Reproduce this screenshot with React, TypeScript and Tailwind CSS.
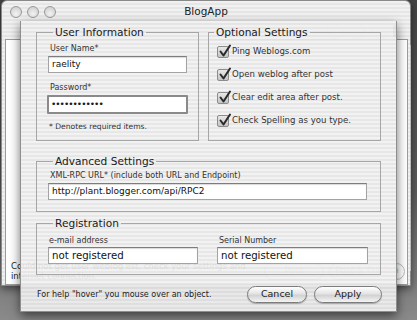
import React from 'react'

const stripes =
  'bg-[repeating-linear-gradient(180deg,#f1f1f1_0px,#f1f1f1_2px,#e6e6e6_2px,#e6e6e6_4px)]'

function Light() {
  return (
    <div className="w-[12px] h-[12px] rounded-full border border-[#9a9a9a] bg-[radial-gradient(circle_at_50%_70%,#f4f4f4,#c9c9c9)]" />
  )
}

function Check({ label }: { label: string }) {
  return (
    <div className="flex items-center h-[23px]">
      <div className="relative w-[12px] h-[12px] rounded-[2px] border border-[#8c8c8c] bg-gradient-to-b from-[#e8e8e8] to-[#c4c4c4] ml-[8px] mr-[3px]">
        <svg viewBox="0 0 14 14" className="absolute -top-[3px] left-[0px] w-[14px] h-[14px]">
          <path d="M2.5 7.5 L5.5 11.5 L12 1.5" fill="none" stroke="#2a2a2a" strokeWidth="2" strokeLinecap="round" strokeLinejoin="round" />
        </svg>
      </div>
      <span className="text-[8.6px] text-[#333]">{label}</span>
    </div>
  )
}

function Field({ value, className = '', text = 'text-[9px]' }: { value: string; className?: string; text?: string }) {
  return (
    <div
      className={`h-[17px] bg-white border border-[#a3a3a3] border-t-[#7d7d7d] shadow-[inset_0_1px_1px_rgba(0,0,0,0.15)] flex items-center px-[3px] ${text} text-[#111] ${className}`}
    >
      {value}
    </div>
  )
}

function Button({ label, w }: { label: string; w: string }) {
  return (
    <div
      className={`${w} h-[17px] rounded-full border border-[#7c7c7c] bg-[linear-gradient(180deg,#ffffff_0%,#e4e4e4_45%,#d2d2d2_55%,#f4f4f4_100%)] shadow-[0_1px_1px_rgba(0,0,0,0.25)] flex items-center justify-center text-[9.5px] text-[#1a1a1a]`}
    >
      {label}
    </div>
  )
}

export default function App() {
  return (
    <div className="relative w-[417px] h-[320px] overflow-hidden bg-[linear-gradient(180deg,#454545_0%,#5c5c5c_60%,#8a8a8a_100%)] font-['DejaVu_Sans',sans-serif]">
      {/* main window behind the sheet */}
      <div className={`absolute left-[1px] top-0 w-[410px] h-[286px] rounded-t-[6px] ${stripes} border border-[#8a8a8a] shadow-[0_3px_8px_rgba(0,0,0,0.5)] flex flex-col`}>
        <div className="h-[21px] flex items-center pl-[8px] gap-[5px] relative">
          <Light />
          <Light />
          <Light />
          <div className="absolute inset-0 flex items-center justify-center text-[10.5px] text-[#222]">BlogApp</div>
        </div>
        <div className="h-[17px] flex items-center justify-end gap-[6px] pr-[14px]">
          <div className="w-[16px] h-[16px] rounded-full border border-[#cfcfcf]" />
          <div className="w-[16px] h-[16px] rounded-full border border-[#cfcfcf]" />
          <div className="w-[16px] h-[16px] rounded-full border border-[#cfcfcf]" />
          <div className="w-[3px] h-[12px] bg-[#777]" />
        </div>
        <div className="flex-1 flex">
          <div className="flex-1 bg-white border border-[#9c9c9c] ml-[3px] flex flex-col justify-end pb-[3px]">
            <div className="flex items-center">
              <div className="pl-[5px] text-[8.5px] leading-[10px] text-[#222] w-[258px]">
                Could not get user weblog list, check your settings and internet connection.
              </div>
              <div className="flex-1 flex justify-end gap-[5px] pr-[2px]">
                <div className="w-[60px] h-[17px] rounded-full border border-[#bbb] text-[9px] text-[#bbb] flex items-center justify-center">Post</div>
                <div className="w-[76px] h-[17px] rounded-full border border-[#bbb] text-[9px] text-[#bbb] flex items-center justify-center">Post &amp; Publish</div>
              </div>
            </div>
          </div>
          <div className="w-[13px] flex flex-col">
            <div className="flex-1 bg-white border-l border-[#bbb] ml-[2px] mr-[1px] mt-[6px] mb-[14px]" />
          </div>
        </div>
      </div>

      {/* sheet */}
      <div className="absolute left-[20px] top-[21px] w-[377px] h-[291px] bg-[repeating-linear-gradient(180deg,rgba(241,241,241,0.93)_0px,rgba(241,241,241,0.93)_2px,rgba(229,229,229,0.93)_2px,rgba(229,229,229,0.93)_4px)] border-x border-b border-[#8e8e8e] shadow-[0_4px_10px_rgba(0,0,0,0.55)] px-[15px] pt-[5px] text-[#1a1a1a]">
        <div className="flex gap-[9px]">
          <fieldset className="w-[163px] h-[115px] border border-[#a6a6a6] px-[11px]">
            <legend className="ml-[5px] px-[2px] text-[10.6px] leading-[13px]">User Information</legend>
            <div className="text-[8px] leading-[10px] pl-[2px] mt-[5px] text-[#333]">User Name*</div>
            <Field value="raelity" className="mt-[2px]" />
            <div className="text-[8px] leading-[10px] pl-[2px] mt-[10px] text-[#333]">Password*</div>
            <div className="mt-[2px] border-[2px] border-[#8a8a8a] rounded-[1px] -mx-[1px]">
              <div className="h-[15px] bg-white flex items-center px-[2px] text-[9px] tracking-[-1px]">••••••••••••</div>
            </div>
            <div className="text-[7.6px] leading-[10px] pl-[1px] mt-[8px] text-[#333]">* Denotes required items.</div>
          </fieldset>
          <fieldset className="w-[173px] h-[115px] border border-[#a6a6a6]">
            <legend className="ml-[5px] px-[2px] text-[10.6px] leading-[13px]">Optional Settings</legend>
            <div className="mt-[1px]">
              <Check label="Ping Weblogs.com" />
              <Check label="Open weblog after post" />
              <Check label="Clear edit area after post." />
              <Check label="Check Spelling as you type." />
            </div>
          </fieldset>
        </div>

        <fieldset className="mt-[14px] w-[345px] h-[57px] border border-[#a6a6a6] px-[11px]">
          <legend className="ml-[5px] px-[2px] text-[10.6px] leading-[13px]">Advanced Settings</legend>
          <div className="text-[8px] leading-[10px] pl-[2px] mt-[3px] text-[#333]">
            XML-RPC URL* (include both URL and Endpoint)
          </div>
          <Field value="http://plant.blogger.com/api/RPC2" className="mt-[2px] mr-[2px]" />
        </fieldset>

        <fieldset className="mt-[5px] w-[345px] h-[58px] border border-[#a6a6a6] px-[11px]">
          <legend className="ml-[5px] px-[2px] text-[10.6px] leading-[13px]">Registration</legend>
          <div className="flex gap-[19px] mt-[6px]">
            <div className="w-[150px]">
              <div className="text-[8px] leading-[10px] pl-[1px] text-[#333]">e-mail address</div>
              <Field value="not registered" text="text-[10.2px]" className="mt-[1px]" />
            </div>
            <div className="w-[151px]">
              <div className="text-[8px] leading-[10px] pl-[2px] text-[#333]">Serial Number</div>
              <Field value="not registered" text="text-[10.2px]" className="mt-[1px]" />
            </div>
          </div>
        </fieldset>

        <div className="flex items-center mt-[11px]">
          <div className="flex-1 text-[8px] text-[#222] pl-[1px]">For help "hover" you mouse over an object.</div>
          <div className="flex gap-[7px] mr-[-1px]">
            <Button label="Cancel" w="w-[60px]" />
            <Button label="Apply" w="w-[68px]" />
          </div>
        </div>
      </div>
    </div>
  )
}
